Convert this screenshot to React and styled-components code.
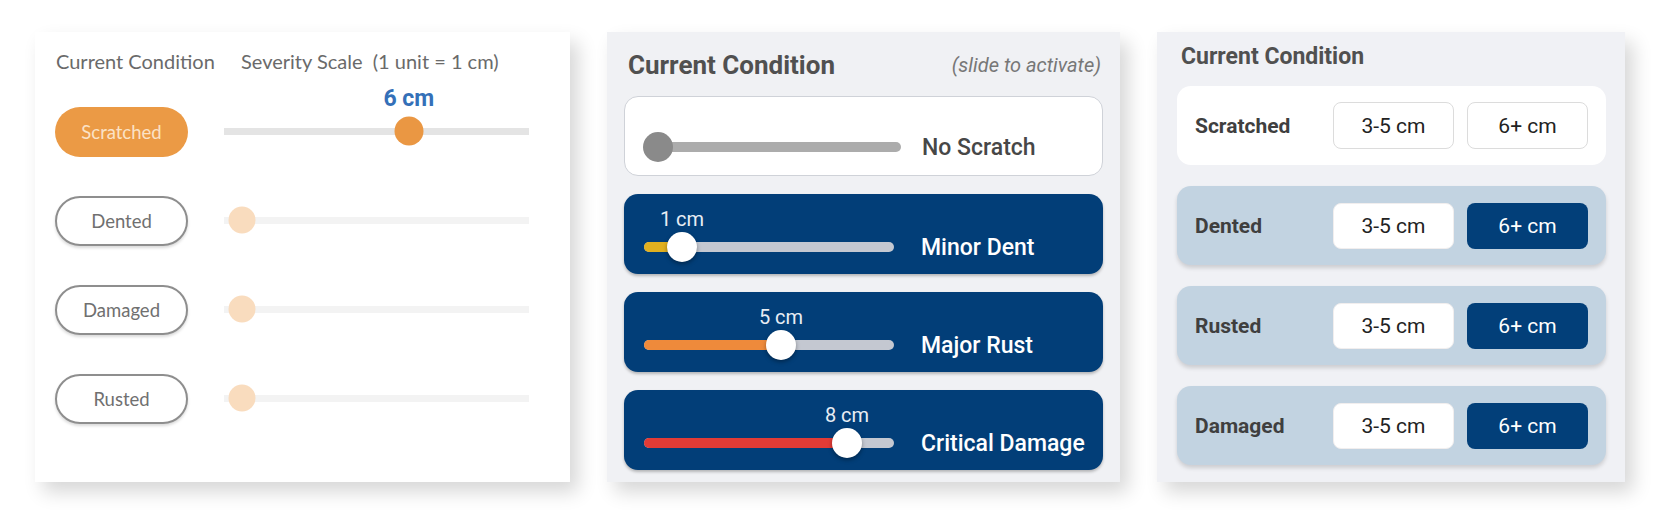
import styled, { createGlobalStyle } from 'styled-components';

const GlobalStyle = createGlobalStyle`
  body {
    margin: 0;
    background: #fff;
    font-family: Roboto, "Noto Sans", sans-serif;
  }
`;

const Stage = styled.div`
  display: flex;
  align-items: flex-start;
  gap: 37px;
  height: 520px;
  padding: 32px 0 0 35px;
  box-sizing: border-box;
`;

const Panel = styled.div`
  height: 450px;
  box-sizing: border-box;
  box-shadow: 8px 10px 18px rgba(0, 0, 0, 0.16);
`;

/* ---------- panel 1: pills + orange sliders ---------- */

const PillPanel = styled(Panel)`
  width: 535px;
  background: #fff;
  padding: 18px 0 0 20px;
`;

const PillHeader = styled.div`
  display: flex;
  height: 22px;
  line-height: 22px;
  margin-bottom: 15px;
  padding-left: 1px;
  font-family: Lato, "Open Sans", sans-serif;
  font-size: 20px;
  color: #6a6a6a;
`;

const HeaderCell = styled.span`
  width: ${p => p.$width || 'auto'};
  white-space: pre;
`;

const PillRow = styled.div`
  display: flex;
  align-items: center;
  gap: 36px;
  height: 89px;
`;

const Pill = styled.div`
  width: 133px;
  height: 50px;
  box-sizing: border-box;
  border-radius: 25px;
  display: flex;
  align-items: center;
  justify-content: center;
  font-family: Lato, "Open Sans", sans-serif;
  font-size: 18.5px;
  background: ${p => (p.$active ? '#eb9a45' : '#fff')};
  color: ${p => (p.$active ? '#fbe2c6' : '#707070')};
  border: ${p => (p.$active ? 'none' : '2px solid #8e8e8e')};
  box-shadow: ${p => (p.$active ? 'none' : '0 2px 3px rgba(0,0,0,0.15)')};
`;

const LineSlider = styled.div`
  position: relative;
  width: 305px;
  height: 30px;
`;

const LineTrack = styled.div`
  position: absolute;
  left: 0;
  right: 0;
  top: 11px;
  height: 7px;
  background: ${p => (p.$faded ? '#f3f3f3' : '#e4e4e4')};
`;

const Dot = styled.div`
  position: absolute;
  top: 14px;
  width: ${p => (p.$faded ? 27 : 29)}px;
  height: ${p => (p.$faded ? 27 : 29)}px;
  border-radius: 50%;
  transform: translate(-50%, -50%);
  background: ${p => (p.$faded ? '#f9dcbe' : '#ea9743')};
`;

const DotValue = styled.span`
  position: absolute;
  bottom: calc(100% + 5px);
  left: 50%;
  transform: translateX(-50%);
  white-space: nowrap;
  font-size: 23px;
  font-weight: 700;
  line-height: 26px;
  color: #3470b8;
`;

const pillRows = [
  { name: 'Scratched', value: 6, active: true },
  { name: 'Dented', value: 0 },
  { name: 'Damaged', value: 0 },
  { name: 'Rusted', value: 0 },
];

function PillScale() {
  return (
    <PillPanel>
      <PillHeader>
        <HeaderCell $width="185px">Current Condition</HeaderCell>
        <HeaderCell>Severity Scale  (1 unit = 1 cm)</HeaderCell>
      </PillHeader>
      {pillRows.map(r => (
        <PillRow key={r.name}>
          <Pill $active={r.active}>{r.name}</Pill>
          <LineSlider>
            <LineTrack $faded={!r.active} />
            <Dot
              $faded={!r.active}
              style={{ left: `calc(18px + (100% - 27px) * ${r.value / 10})` }}
            >
              {r.active && <DotValue>{r.value} cm</DotValue>}
            </Dot>
          </LineSlider>
        </PillRow>
      ))}
    </PillPanel>
  );
}

/* ---------- panel 2: dark slider cards ---------- */

const SlidePanel = styled(Panel)`
  width: 513px;
  background: #f0f1f4;
  padding: 20px 17px 0;
  display: flex;
  flex-direction: column;
  gap: 18px;
`;

const SlideHeader = styled.div`
  display: flex;
  align-items: center;
  justify-content: space-between;
  height: 26px;
  padding: 0 2px 0 4px;
`;

const Title = styled.h2`
  margin: 0;
  font-size: ${p => p.$size || 26}px;
  font-weight: 700;
  color: #505050;
`;

const Hint = styled.span`
  font-size: 20px;
  font-style: italic;
  color: #777;
`;

const SlideCard = styled.div`
  height: 80px;
  box-sizing: border-box;
  border-radius: 14px;
  padding: ${p => (p.$dark ? '38px 0 0 20px' : '35px 0 0 19px')};
  background: ${p => (p.$dark ? '#023e78' : '#fff')};
  border: ${p => (p.$dark ? 'none' : '1.5px solid #cfd2d8')};
  box-shadow: ${p => (p.$dark ? '0 2px 3px rgba(0,0,0,0.25)' : 'none')};
`;

const SlideRow = styled.div`
  display: flex;
  align-items: center;
  gap: ${p => p.$gap}px;
  height: 30px;
`;

const BarSlider = styled.div`
  position: relative;
  width: ${p => p.$width}px;
  height: 30px;
  flex-shrink: 0;
`;

const Bar = styled.div`
  position: absolute;
  left: 0;
  top: 10px;
  height: 10px;
  border-radius: 5px;
  background: ${p => p.$color};
`;

const Knob = styled.div`
  position: absolute;
  top: 0;
  width: 30px;
  height: 30px;
  border-radius: 50%;
  transform: translateX(-50%);
  background: ${p => (p.$dark ? '#fff' : '#8a8a8a')};
  box-shadow: ${p => (p.$dark ? '0 2px 4px rgba(0,0,0,0.35)' : 'none')};
`;

const KnobValue = styled.span`
  position: absolute;
  bottom: calc(100% + 2px);
  left: 50%;
  transform: translateX(-50%);
  white-space: nowrap;
  font-size: 20px;
  line-height: 22px;
  color: #e8edf4;
`;

const SlideName = styled.span`
  font-size: 23px;
  font-weight: 500;
  color: ${p => (p.$dark ? '#fff' : '#474747')};
`;

const slideRows = [
  { name: 'No Scratch', pos: 0.055, width: 257 },
  { name: 'Minor Dent', pos: 0.152, width: 250, value: '1 cm', color: '#e1b020' },
  { name: 'Major Rust', pos: 0.548, width: 250, value: '5 cm', color: '#ee8a3b' },
  { name: 'Critical Damage', pos: 0.812, width: 250, value: '8 cm', color: '#e23b36' },
];

function SlideScale() {
  return (
    <SlidePanel>
      <SlideHeader>
        <Title>Current Condition</Title>
        <Hint>(slide to activate)</Hint>
      </SlideHeader>
      {slideRows.map(r => {
        const dark = Boolean(r.value);
        return (
          <SlideCard key={r.name} $dark={dark}>
            <SlideRow $gap={(dark ? 277 : 278) - r.width}>
              <BarSlider $width={r.width}>
                <Bar $color={dark ? '#c4c8d1' : '#acacac'} style={{ width: '100%' }} />
                {dark && <Bar $color={r.color} style={{ width: `${r.pos * 100}%` }} />}
                <Knob $dark={dark} style={{ left: `${r.pos * 100}%` }}>
                  {dark && <KnobValue>{r.value}</KnobValue>}
                </Knob>
              </BarSlider>
              <SlideName $dark={dark}>{r.name}</SlideName>
            </SlideRow>
          </SlideCard>
        );
      })}
    </SlidePanel>
  );
}

/* ---------- panel 3: size choice buttons ---------- */

const ChoicePanel = styled(Panel)`
  width: 468px;
  background: #f0f1f5;
  padding: 13px 19px 0 20px;
  display: flex;
  flex-direction: column;
  gap: 21px;
`;

const ChoiceHeader = styled.div`
  height: 24px;
  line-height: 24px;
  padding-left: 4px;
  margin-bottom: -4px;
`;

const ChoiceCard = styled.div`
  height: 79px;
  box-sizing: border-box;
  border-radius: 14px;
  padding: 0 18px;
  display: flex;
  align-items: center;
  gap: 13px;
  background: ${p => (p.$tinted ? '#c2d3e1' : '#fff')};
  box-shadow: ${p => (p.$tinted ? '0 3px 4px rgba(0,0,0,0.15)' : 'none')};
`;

const ChoiceLabel = styled.span`
  flex: 1;
  font-size: 21px;
  font-weight: 700;
  color: #3f3f3f;
`;

const Choice = styled.button`
  width: 121px;
  height: ${p => (p.$variant === 'outline' ? 47 : 46)}px;
  box-sizing: border-box;
  border-radius: 8px;
  font-family: Roboto, "Noto Sans", sans-serif;
  font-size: 21px;
  cursor: pointer;
  background: ${p => (p.$variant === 'filled' ? '#023f79' : '#fff')};
  color: ${p => (p.$variant === 'filled' ? '#fff' : '#222')};
  border: ${p =>
    p.$variant === 'outline' ? '1.5px solid #dcdcdc' : p.$variant === 'filled' ? 'none' : '1px solid #f1eeee'};
`;

const choiceRows = ['Scratched', 'Dented', 'Rusted', 'Damaged'];

function ChoiceScale() {
  return (
    <ChoicePanel>
      <ChoiceHeader>
        <Title $size={23}>Current Condition</Title>
      </ChoiceHeader>
      {choiceRows.map((name, i) => {
        const tinted = i > 0;
        return (
          <ChoiceCard key={name} $tinted={tinted}>
            <ChoiceLabel>{name}</ChoiceLabel>
            <Choice $variant={tinted ? 'plain' : 'outline'}>3-5 cm</Choice>
            <Choice $variant={tinted ? 'filled' : 'outline'}>6+ cm</Choice>
          </ChoiceCard>
        );
      })}
    </ChoicePanel>
  );
}

export default function App() {
  return (
    <>
      <GlobalStyle />
      <Stage>
        <PillScale />
        <SlideScale />
        <ChoiceScale />
      </Stage>
    </>
  );
}
